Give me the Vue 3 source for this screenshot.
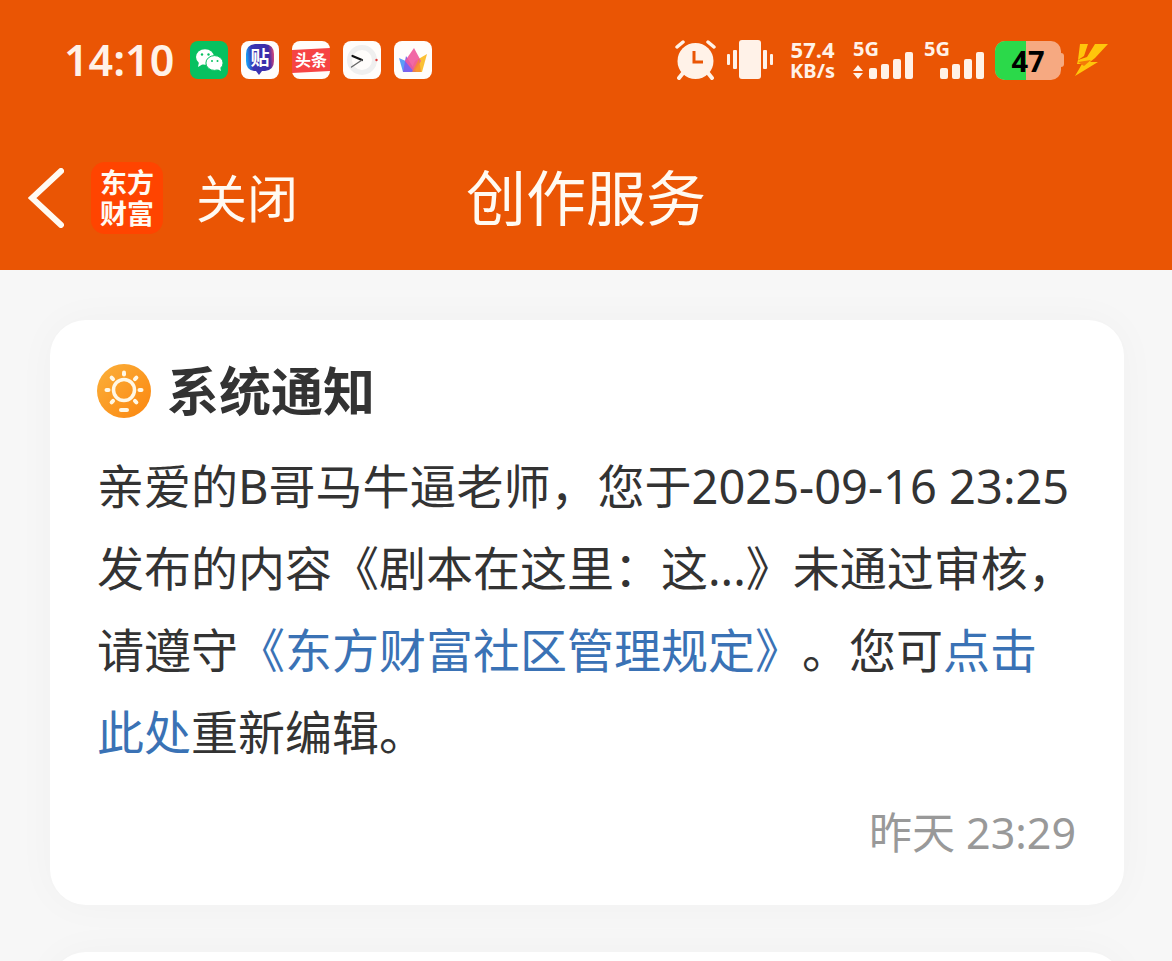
<script setup>
import { ref } from 'vue'

const now = ref('14:10')
const battery = ref(47)
const netSpeed = ref({ value: '57.4', unit: 'KB/s' })

const notice = ref({
  title: '系统通知',
  name: 'B哥马牛逼老师',
  publishedAt: '2025-09-16 23:25',
  content: '剧本在这里：这...',
  time: '昨天 23:29'
})

// left edge and height of each signal bar
const bars = [
  { x: 16, h: 11 },
  { x: 28, h: 15 },
  { x: 40, h: 20 },
  { x: 52, h: 27 }
]

const rays = [0, 45, 90, 135, 225, 270, 315]
</script>

<template>
  <div class="page">
    <header class="header">
      <div class="status-bar">
        <div class="status-left">
          <span class="clock">{{ now }}</span>

          <svg class="app-icon" viewBox="0 0 38 38">
            <rect width="38" height="38" rx="8" fill="#07c160" />
            <ellipse cx="15" cy="16" rx="9" ry="7.8" fill="#fff" />
            <path d="M9 21l-1 5 5-3z" fill="#fff" />
            <ellipse cx="24.5" cy="22" rx="8.6" ry="7.4" fill="#fff" stroke="#07c160" stroke-width="1" />
            <path d="M27 28l4 2-1-4z" fill="#fff" />
            <g fill="#07c160">
              <circle cx="12" cy="13.5" r="1.2" />
              <circle cx="18.5" cy="13.5" r="1.2" />
              <circle cx="22" cy="20" r="1" />
              <circle cx="27.5" cy="20" r="1" />
            </g>
          </svg>

          <svg class="app-icon" viewBox="0 0 38 38">
            <defs>
              <linearGradient id="tieba" x1="0" y1="0.3" x2="1" y2="0.2">
                <stop offset="0" stop-color="#19a0f5" />
                <stop offset="0.2" stop-color="#3a35b4" />
                <stop offset="0.8" stop-color="#3b2ba8" />
                <stop offset="1" stop-color="#e84a76" />
              </linearGradient>
            </defs>
            <rect width="38" height="38" rx="8" fill="#fffdfb" />
            <path d="M14 3h10q9 1 9 10v7q0 9-9 10h-3l-3 4-3-4h-2q-8-1-8-10v-7q0-9 9-10z" fill="url(#tieba)" />
            <text x="19" y="24" class="icon-text" font-size="19">贴</text>
          </svg>

          <svg class="app-icon" viewBox="0 0 38 38">
            <rect width="38" height="38" rx="8" fill="#fffdfb" />
            <path d="M0 9l38-2v23L0 32z" fill="#f64444" />
            <text x="19" y="25" class="icon-text" font-size="16">头条</text>
          </svg>

          <svg class="app-icon" viewBox="0 0 38 38">
            <rect width="38" height="38" rx="8" fill="#fffdfb" />
            <circle cx="19" cy="19" r="12.5" fill="none" stroke="#efefef" stroke-width="5" />
            <path d="M19 19L9.500 15" stroke="#111" stroke-width="2.2" stroke-linecap="round" />
            <path d="M19 19L8.500 26" stroke="#666" stroke-width="1.4" stroke-linecap="round" />
            <circle cx="33.5" cy="19" r="1.2" fill="#e23b3b" />
          </svg>

          <svg class="app-icon" viewBox="0 0 38 38">
            <rect width="38" height="38" rx="8" fill="#fffdfb" />
            <path d="M5 17l9 4 8 10H9z" fill="#5a9df8" />
            <path d="M33 13l-5 18H16l5-11z" fill="#fbc034" />
            <path d="M12 15l10 16H9z" fill="#7a63ee" />
            <path d="M20 7l7 13-7 11-9-11z" fill="#f0589c" opacity="0.9" />
            <path d="M25 18l2 13h-9z" fill="#f8892f" opacity="0.8" />
          </svg>
        </div>

        <div class="status-right">
          <svg class="alarm" viewBox="0 0 41 40">
            <g stroke="#fff2e8" stroke-linecap="round" fill="none">
              <path d="M2 7l6-5M39 7l-6-5" stroke-width="3.5" />
              <path d="M8 33l-4 5M33 33l4 5" stroke-width="4" />
            </g>
            <circle cx="20.5" cy="21" r="18" fill="#fff2e8" />
            <path d="M19 11v11h9" stroke="#ea5504" stroke-width="3" fill="none" />
          </svg>

          <svg class="vibrate" viewBox="0 0 46 40">
            <g fill="#fff2e8">
              <rect x="0" y="14" width="3" height="11" rx="1" />
              <rect x="6" y="10" width="4" height="19" rx="1" />
              <rect x="12" y="0" width="22" height="39" rx="3" />
              <rect x="36" y="10" width="4" height="19" rx="1" />
              <rect x="43" y="14" width="3" height="11" rx="1" />
            </g>
          </svg>

          <div class="speed">
            <span class="speed-value">{{ netSpeed.value }}</span>
            <span class="speed-unit">{{ netSpeed.unit }}</span>
          </div>

          <svg v-for="sim in 2" :key="sim" class="signal" viewBox="0 0 60 40">
            <text x="0" y="16" class="signal-text">5G</text>
            <path v-if="sim === 1" d="M0 31l5-6 5 6zM0 33l5 6 5-6z" fill="#fff2e8" />
            <rect v-for="bar in bars" :key="bar.x" :x="bar.x" :y="39 - bar.h" width="8" :height="bar.h" rx="2"
              fill="#fff2e8" />
          </svg>

          <div class="battery">
            <div class="battery-body">
              <div class="battery-fill" :style="`width:${battery}%`" />
              <span class="battery-text">{{ battery }}</span>
            </div>
            <div class="battery-tip" />
          </div>

          <svg class="bolt" viewBox="0 0 33 32">
            <path d="M5 0h8L9 12l-6 4z" fill="#ffc60b" />
            <path d="M20 0h13L20 14l-5 4h8L0 32l7-12H2l1-4 9-3z" fill="#ffc60b" />
            <path d="M3 18l13-2-7 6z" fill="#f47a08" />
          </svg>
        </div>
      </div>

      <nav class="nav">
        <div class="nav-left">
          <button class="back-btn" aria-label="返回">
            <svg viewBox="0 0 36 60">
              <path d="M33 3L4 30l29 27" fill="none" stroke="#fffaf2" stroke-width="6" stroke-linecap="round" />
            </svg>
          </button>
          <div class="logo">
            <span>东方</span>
            <span>财富</span>
          </div>
          <button class="close-btn">关闭</button>
        </div>
        <h1 class="nav-title">创作服务</h1>
      </nav>
    </header>

    <main class="list">
      <article class="card">
        <h2 class="card-title">
          <svg class="sun" viewBox="0 0 54 54">
            <defs>
              <linearGradient id="sun" x1="0" y1="0" x2="1" y2="1">
                <stop offset="0" stop-color="#fbb03a" />
                <stop offset="1" stop-color="#fb860f" />
              </linearGradient>
            </defs>
            <circle cx="27" cy="27" r="27" fill="url(#sun)" />
            <circle cx="27" cy="26" r="10.5" fill="none" stroke="#fff8e6" stroke-width="3.5" />
            <g stroke="#fff8e6" stroke-width="4" stroke-linecap="round">
              <path v-for="deg in rays" :key="deg" d="M27 8.5v2" :transform="`rotate(${deg} 27 26)`" />
              <path d="M24 46h6" />
            </g>
          </svg>
          <span>{{ notice.title }}</span>
        </h2>

        <p class="card-text">亲爱的{{ notice.name }}，您于{{ notice.publishedAt }}发布的内容《{{ notice.content }}》未通过审核，请遵守<a href="#">《东方财富社区管理规定》</a>。您可<a href="#">点击此处</a>重新编辑。</p>

        <time class="card-time">{{ notice.time }}</time>
      </article>

      <article class="card"></article>
    </main>
  </div>
</template>

<style>
body {
  margin: 0;
}
</style>

<style scoped>
.page {
  height: 100vh;
  overflow: hidden;
  display: flex;
  flex-direction: column;
  background: #f7f7f7;
  color: #333;
  font-family: "Noto Sans", "Noto Sans CJK SC", sans-serif;
}

.header {
  flex-shrink: 0;
  background: #ea5504;
  color: #fffaf2;
}

.status-bar {
  display: flex;
  align-items: center;
  justify-content: space-between;
  height: 120px;
  padding: 0 64px;
}

.status-left {
  display: flex;
  align-items: center;
  gap: 13px;
}

.clock {
  margin-right: 3px;
  font-size: 43px;
  font-weight: 600;
  line-height: 60px;
  color: #fff2e8;
}

.app-icon {
  width: 38px;
  height: 38px;
}

.icon-text {
  font-family: "Noto Sans CJK SC", sans-serif;
  font-weight: 700;
  fill: #fff;
  text-anchor: middle;
}

.status-right {
  display: flex;
  align-items: center;
  gap: 11px;
}

.alarm {
  width: 41px;
  height: 40px;
}

.vibrate {
  width: 46px;
  height: 40px;
}

.speed {
  display: flex;
  flex-direction: column;
  align-items: center;
  margin: 0 7px 0 6px;
  font-weight: 700;
  line-height: 22px;
  color: #fff2e8;
}

.speed-value {
  font-size: 22px;
}

.speed-unit {
  font-size: 20px;
}

.signal {
  width: 60px;
  height: 40px;
  overflow: visible;
}

.signal-text {
  font-size: 20px;
  font-weight: 700;
  fill: #fff2e8;
}

.battery {
  display: flex;
  align-items: center;
}

.battery-body {
  position: relative;
  width: 66px;
  height: 39px;
  border-radius: 10px;
  overflow: hidden;
  background: #f6a981;
}

.battery-fill {
  height: 100%;
  background: #2bd94a;
}

.battery-text {
  position: absolute;
  inset: 0;
  text-align: center;
  font-size: 29px;
  font-weight: 700;
  line-height: 39px;
  color: #000;
}

.battery-tip {
  width: 3px;
  height: 14px;
  border-radius: 0 3px 3px 0;
  background: #f6a981;
}

.bolt {
  width: 33px;
  height: 32px;
}

.nav {
  display: grid;
  grid-template-columns: 1fr auto 1fr;
  align-items: center;
  height: 144px;
  padding: 6px 28px 0;
}

.nav-left {
  display: flex;
  align-items: center;
}

button {
  padding: 0;
  border: none;
  background: none;
  color: inherit;
  font-family: inherit;
  cursor: pointer;
}

.back-btn {
  width: 36px;
  height: 60px;
}

.back-btn svg {
  display: block;
}

.logo {
  display: flex;
  flex-direction: column;
  align-items: center;
  justify-content: center;
  width: 72px;
  height: 72px;
  margin: 0 33px 0 27px;
  border-radius: 14px;
  background: #ff4400;
  font-size: 27px;
  font-weight: 700;
  line-height: 31px;
}

.close-btn {
  font-size: 51px;
  line-height: 72px;
}

.nav-title {
  margin: 0;
  font-size: 60px;
  font-weight: 400;
  line-height: 84px;
}

.list {
  display: flex;
  flex-direction: column;
  gap: 47px;
  padding: 50px 48px 0 50px;
}

.card {
  flex-shrink: 0;
  min-height: 100px;
  box-sizing: border-box;
  padding: 35px 48px 42px 47px;
  border-radius: 36px;
  background: #fff;
  box-shadow: 0 0 40px rgba(0, 0, 0, 0.03);
}

.card-title {
  display: flex;
  align-items: center;
  gap: 16px;
  margin: 0 0 18px;
  font-size: 52px;
  font-weight: 700;
  line-height: 72px;
}

.sun {
  width: 54px;
  height: 54px;
}

.card-text {
  margin: 0;
  font-size: 47px;
  line-height: 82px;
  text-spacing-trim: space-all;
}

.card-text a {
  color: #3a72b5;
  text-decoration: none;
}

.card-time {
  display: block;
  margin-top: 30px;
  font-size: 43px;
  line-height: 60px;
  text-align: right;
  color: #999;
}
</style>
